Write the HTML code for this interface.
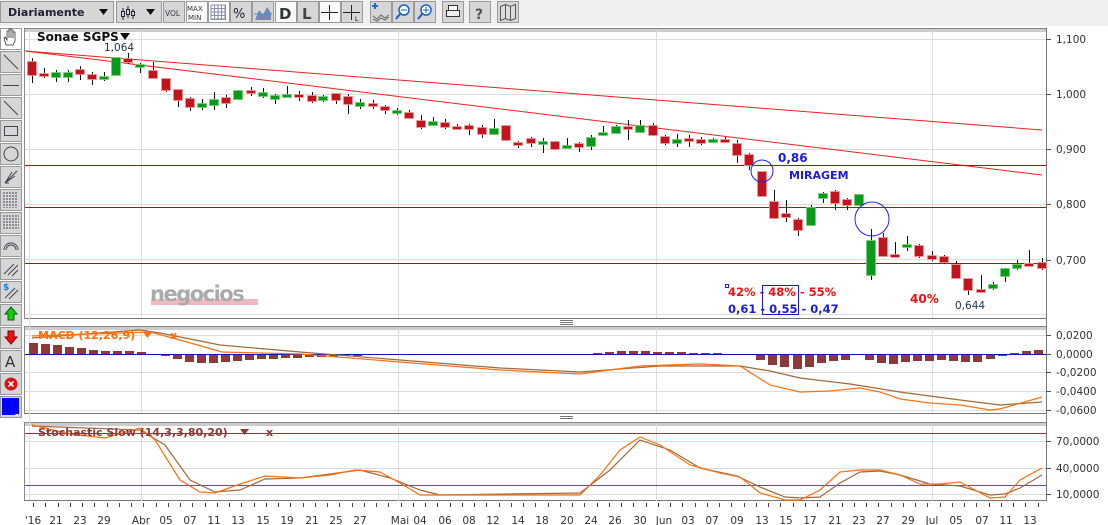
<!DOCTYPE html>
<html><head><meta charset="utf-8"><style>
html,body{margin:0;padding:0;background:#fff;width:1108px;height:525px;overflow:hidden;font-family:"DejaVu Sans",Verdana,sans-serif}
svg{position:absolute;left:0;top:0}
</style></head><body>
<svg id="s" width="1108" height="525" xmlns="http://www.w3.org/2000/svg" font-family="DejaVu Sans, Liberation Sans, sans-serif"></svg>
<script>
var o=[];
function P(s){o.push(s);}
P('<rect x="0" y="0" width="1108" height="26" fill="#f0f0f0"/>');
var btn=[[0,113],[116,161],[163,184],[186,207],[208,229],[230,251],[252,273],[275,296],[297,318],[319,340],[341,362],[370,391],[392,413],[414,435],[442,463],[469,490],[497,518]];
btn.forEach(function(b,i){var f=(i==3||i==4||i==7||i==9)?'#fafafa':'#d6d6d6';
P('<rect x="'+(b[0]+.5)+'" y="1.5" width="'+(b[1]-b[0])+'" height="21" fill="'+f+'" stroke="#9a9a9a"/>');});
P('<text x="8" y="16" font-size="11" font-weight="bold" fill="#223">Diariamente</text>');
P('<path d="M99 9h9l-4.5 6z" fill="#111"/><path d="M146 9h9l-4.5 6z" fill="#111"/>');
P('<g stroke="#223" fill="#d6d6d6"><path d="M123 8v12M128 6v12M133 9v10"/><rect x="121.5" y="11.5" width="3" height="5"/><rect x="126.5" y="9.5" width="3" height="5"/><rect x="131.5" y="11.5" width="3" height="4"/></g>');
P('<text x="165" y="16" font-size="7.5" fill="#334">VOL</text>');
P('<text x="187" y="11" font-size="7" fill="#334">MAX</text><text x="188" y="20" font-size="7" fill="#334">MIN</text>');
var g='';for(var i=0;i<5;i++){g+='M'+(211+i*3.5)+' 5v15M211 '+(5+i*3.5)+'h15';}
P('<path d="'+g+'M211 19.5h15M225.5 5v15" stroke="#8890b0" fill="none"/>');
P('<text x="233" y="18" font-size="13" fill="#223">%</text>');
P('<path d="M255 20l4-10 4 5 4-8 4 6v7z" fill="#7a86b0"/><path d="M254 14h18" stroke="#39c"/>');
P('<text x="279" y="19" font-size="15" font-weight="bold" fill="#333">D</text>');
P('<text x="302" y="19" font-size="15" font-weight="bold" fill="#444">L</text>');
P('<path d="M329.5 5v15M321 12.5h17M351.5 5v15M343 12.5h17" stroke="#222" fill="none"/><text x="355" y="21" font-size="6">L</text>');
P('<path d="M373 16l4 3 4-4 4 3 4-3M373 19l4 2 4-3 4 2 4-3" stroke="#666" fill="none"/><path d="M375 3v6M372 6h6" stroke="#1570d0" stroke-width="2"/>');
P('<circle cx="404" cy="10" r="5" fill="#fff" stroke="#1560c0" stroke-width="1.5"/><path d="M401 10h6" stroke="#1560c0"/><path d="M400 14l-4 5" stroke="#1560c0" stroke-width="2"/>');
P('<circle cx="426" cy="10" r="5" fill="#fff" stroke="#1560c0" stroke-width="1.5"/><path d="M423 10h6M426 7v6" stroke="#1560c0"/><path d="M422 14l-4 5" stroke="#1560c0" stroke-width="2"/>');
P('<rect x="446.5" y="10.5" width="13" height="6" fill="#eee" stroke="#333"/><rect x="448.5" y="5.5" width="9" height="5" fill="#fff" stroke="#333"/>');
P('<text x="475" y="19" font-size="14" font-weight="bold" fill="#555">?</text>');
P('<path d="M500.5 6.5l5 -2 5 2 5 -2v14l-5 2-5-2-5 2z M505.5 4.5v14M510.5 6.5v14" stroke="#555" fill="#ddd"/>');
var ty=[28,51,74,97,120,143,166,189,212,235,258,281,304,327,350,373,396];
ty.forEach(function(y,i){P('<rect x="0.5" y="'+(y+.5)+'" width="21" height="21" fill="'+(i==0?'#fff':'#d6d6d6')+'" stroke="#999"/>');});
P('<path d="M6 45l-2-7 1-1 2 3v-9h2v7-9h2v9-8h2v8-6h2v9l-2 4z" fill="#fff" stroke="#333" stroke-width=".8"/>');
P('<g stroke="#445" fill="none"><path d="M4 55l14 14M3 85.5h16M4 101l14 14"/><rect x="4.5" y="126.5" width="13" height="9"/><circle cx="11" cy="154" r="7"/><path d="M5 183l12-12M5 183l10-7M5 183l7-11M5 183h4"/><path d="M4 192v16M7 192v16M10 192v16M13 192v16M16 192v16" stroke-dasharray="2 1"/><path d="M3 216h16M3 219h16M3 222h16M3 225h16M3 228h16" stroke-dasharray="2 1"/><path d="M4 250a7 7 0 0 1 14 0M6 250a5 5 0 0 1 10 0"/><path d="M4 274l10-10M8 275l10-10M12 276l6-6"/><path d="M5 298l10-10M9 299l9-9"/></g>');
P('<text x="3" y="290" font-size="9" font-weight="bold" fill="#1080e0">$</text>');
P('<path d="M11 307l6 7h-3v6h-6v-6h-3z" fill="#1c1" stroke="#060"/>');
P('<path d="M11 344l6-7h-3v-6h-6v6h-3z" fill="#e11" stroke="#800"/>');
P('<text x="5" y="367" font-size="15" fill="#333">A</text>');
P('<circle cx="11" cy="384" r="6.5" fill="#d01818"/><path d="M8.5 381.5l5 5M13.5 381.5l-5 5" stroke="#fff" stroke-width="1.5"/>');
P('<rect x="2" y="398" width="17" height="17" fill="#0000ff"/><path d="M15 414h4l-2 2z" fill="#fff"/>');
function panel(y1,y2){P('<rect x="24.5" y="'+(y1+.5)+'" width="1022" height="'+(y2-y1)+'" fill="#fff" stroke="#888"/><rect x="25" y="'+(y1+1)+'" width="1021" height="3" fill="#ccc"/>');}
panel(28,318);panel(326,413);panel(422,500);
P('<path d="M24 318.5h1023M24 413.5h1023M24 500.5h1023M1046.5 28v473" stroke="#777"/>');
P('<path d="M560 320.5h13M560 322.5h13M560 324.5h13M560 416.5h13M560 418.5h13" stroke="#777"/>');
var gl='';[39,94,149,204,259,314].forEach(function(y){gl+='M25 '+(y+.5)+'h1021';});
[335,372,391,410].forEach(function(y){gl+='M25 '+(y+.5)+'h1021';});
[441,468,494].forEach(function(y){gl+='M25 '+(y+.5)+'h1021';});
[141,398,656,932].forEach(function(x){gl+='M'+(x+.5)+' 30v288M'+(x+.5)+' 328v85M'+(x+.5)+' 424v77';});
gl+='M29.5 30v470';
P('<path d="'+gl+'" stroke="#ddd" fill="none"/>');
function al(y,t){P('<path d="M1046 '+(y+.5)+'h5" stroke="#555"/><text x="1056" y="'+(y+4)+'" font-size="10.5" fill="#333">'+t+'</text>');}
al(39,'1,100');al(94,'1,000');al(149,'0,900');al(204,'0,800');al(260,'0,700');
al(335,'0,0200');al(354,'0,0000');al(372,'-0,0200');al(391,'-0,0400');al(410,'-0,0600');
al(441,'70,0000');al(468,'40,0000');al(494,'10,0000');
P('<rect x="151" y="299" width="107" height="6" fill="#f0b8c0"/><text x="150" y="301" font-size="21" font-weight="bold" fill="#aaa" letter-spacing="-1.5">negocios</text>');
P('<path d="M25 51L1042 130M25 51L1042 175" stroke="#ee2020" fill="none"/>');
P('<path d="M25 165.5h1021M25 207.5h1021M25 263.5h1021" stroke="#b01010" fill="none"/>');
var C=[[32,62,75,58,83,0],[44,74,76,68,78,0],[56,73,77,70,82,1],[68,73,77,70,82,1],[80,70,74,66,80,0],[92,75,79,72,85,0],[104,77,79,72,81,1],[116,58,75,58,75,1],[128,59,62,53,64,0],[140,65,67,63,73,1],[153,71,78,62,78,0],[166,79,90,79,92,0],[178,90,100,90,107,0],[190,99,107,97,111,0],[202,104,107,99,110,1],[214,100,105,92,110,1],[226,98,103,95,108,0],[238,91,99,90,100,1],[251,91,93,87,96,0],[263,93,96,88,98,1],[275,96,99,94,104,1],[287,95,96,86,96,1],[299,95,97,91,101,0],[312,96,101,92,103,0],[323,97,100,95,102,1],[336,94,100,95,104,0],[348,97,104,94,114,0],[360,103,106,99,109,1],[373,104,106,100,109,0],[385,107,110,105,114,0],[397,111,113,108,115,1],[409,113,118,110,118,0],[421,121,127,115,129,0],[433,122,125,117,126,1],[445,123,127,119,129,0],[457,127,128,124,129,0],[469,126,129,124,135,0],[482,128,134,125,138,0],[494,129,134,119,135,1],[506,126,140,126,141,0],[518,143,145,141,148,0],[531,139,143,137,147,0],[543,142,144,138,153,1],[555,142,149,141,150,0],[567,146,147,138,148,1],[579,144,147,142,152,0],[591,138,146,135,150,1],[603,133,135,126,136,1],[616,127,133,125,134,1],[628,127,129,120,140,0],[640,126,132,120,133,1],[653,126,135,123,136,0],[665,137,143,135,145,0],[677,140,143,134,147,1],[689,139,140,135,147,0],[701,140,143,137,145,0],[713,140,142,138,143,1],[725,140,142,137,143,0],[737,144,155,140,163,0],[749,155,165,153,170,0],[762,172,196,172,196,0],[774,202,218,190,218,0],[786,214,217,200,222,0],[798,220,230,218,236,0],[811,208,225,205,225,1],[823,194,198,192,203,1],[835,192,203,190,210,0],[847,200,205,198,210,0],[859,195,205,195,205,1],[871,241,275,229,280,1],[883,238,256,233,257,0],[895,255,256,242,257,0],[907,245,247,236,251,1],[919,246,256,244,258,0],[932,256,259,251,261,0],[944,257,262,255,264,0],[956,265,278,261,279,0],[968,279,290,279,295,0],[981,290,291,275,291,0],[993,285,288,282,290,1],[1005,269,276,268,282,1],[1017,265,268,260,270,1],[1029,264,265,250,266,0],[1042,263,268,258,270,0]];
C.forEach(function(c){var x=c[0];P('<path d="M'+(x+.5)+' '+c[3]+'V'+c[4]+'" stroke="#111"/>');
var h=Math.max(c[2]-c[1],2);P('<rect x="'+(x-4.5)+'" y="'+(c[1]-.5)+'" width="9" height="'+(h+1)+'" fill="'+(c[5]?'#0a9a1a':'#c0141e')+'" stroke="'+(c[5]?'#7c7':'#e99')+'" stroke-width=".8"/>');});
P('<text x="104" y="51" font-size="10.5" fill="#234">1,064</text>');
P('<text x="37" y="41" font-size="12" font-weight="bold" fill="#111">Sonae SGPS</text><path d="M120 33h10l-5 7z" fill="#111"/>');
P('<circle cx="762" cy="171" r="11" fill="none" stroke="#2020ee"/><circle cx="872" cy="219" r="17" fill="none" stroke="#2020ee"/>');
P('<text x="778" y="162" font-size="12" font-weight="bold" fill="#1a1ae0">0,86</text><text x="789" y="179" font-size="11" font-weight="bold" fill="#1a1ae0">MIRAGEM</text>');
P('<text x="728" y="296" font-size="11.5" font-weight="bold" fill="#ee1111">42% - 48% - 55%</text><text x="728" y="313" font-size="11.5" font-weight="bold" fill="#1a1ae0">0,61 - 0,55 - 0,47</text>');
P('<rect x="725.5" y="284.5" width="3" height="3" fill="none" stroke="#1a1ae0"/><rect x="762.5" y="285.5" width="36" height="29" fill="none" stroke="#1a1ae0"/>');
P('<text x="910" y="303" font-size="12" font-weight="bold" fill="#ee1111">40%</text><text x="955" y="309" font-size="10.5" fill="#234">0,644</text>');
var H=[[33,343],[45,344],[57,345],[69,347],[81,348],[93,350],[105,351],[117,351],[129,351],[141,352],[153,355],[165,356],[177,359],[189,362],[201,363],[213,363],[225,362],[237,361],[249,360],[261,359],[273,359],[285,358],[297,358],[309,357],[321,357],[333,357],[345,356],[357,356],[369,355],[381,355],[393,355],[405,355],[417,355],[429,355],[441,355],[453,355],[465,355],[477,355],[489,355],[501,355],[513,355],[525,355],[537,355],[549,355],[561,355],[573,355],[585,355],[597,353],[609,352],[621,351],[633,351],[645,351],[657,352],[669,352],[681,352],[693,353],[705,353],[717,353],[748,355],[760,360],[772,365],[784,367],[797,369],[809,367],[821,363],[833,361],[845,360],[857,355],[869,360],[881,363],[893,364],[905,362],[917,361],[929,361],[941,360],[953,361],[965,362],[977,362],[990,359],[1002,356],[1014,353],[1026,351],[1038,350]];
H.forEach(function(h){var y1=Math.min(h[1],354),y2=Math.max(h[1],354);P('<rect x="'+(h[0]-4)+'" y="'+y1+'" width="9" height="'+Math.max(y2-y1,1)+'" fill="#8b3a3a"/>');});
P('<path d="M25 354.5h1021" stroke="#1010c0"/>');
function pl(pts,col){P('<polyline points="'+pts+'" fill="none" stroke="'+col+'" stroke-width="1.2"/>');}
pl('32,338 140,330 160,333 220,345 300,352 400,360 500,368 580,372 660,366 740,366 770,371 800,378 850,384 900,392 960,400 1000,405 1042,402','#a06a3a');
pl('32,336 150,332 180,340 222,352 300,354 400,362 500,370 580,374 640,366 700,364 740,366 770,385 800,392 830,391 860,388 880,392 900,399 930,403 960,405 990,410 1000,409 1042,397','#ff7010');
P('<text x="38" y="339" font-size="11" font-weight="bold" fill="#ff7010">MACD (12,26,9)</text><path d="M143 332h9l-4.5 6z" fill="#ff7010"/><text x="170" y="339" font-size="11" font-weight="bold" fill="#ff7010">x</text>');
P('<path d="M25 433.5h1021" stroke="#8b3a3a"/><path d="M25 485.5h1021" stroke="#6a4a9a"/>');
pl('32,426 140,430 165,445 190,480 215,492 240,490 265,479 300,478 360,470 390,478 420,490 440,495 580,493 610,470 640,440 670,450 700,468 737,476 760,487 785,497 800,498 820,497 840,483 860,472 880,471 900,475 930,484 960,486 990,495 1005,494 1020,488 1042,475','#a06a3a');
pl('32,425 70,434 105,438 140,428 155,440 180,480 200,492 215,493 240,484 265,476 300,478 330,475 355,470 380,472 400,483 420,495 580,495 600,475 620,450 640,437 660,445 690,465 720,473 740,477 760,493 785,500 800,500 820,490 840,472 860,470 880,470 900,475 920,484 940,484 960,482 975,490 990,498 1005,497 1020,480 1042,468','#ff7010');
P('<text x="38" y="436" font-size="11" font-weight="bold" fill="#8b3a3a">Stochastic Slow (14,3,3,80,20)</text><path d="M240 429h9l-4.5 6z" fill="#8b3a3a"/><text x="266" y="436" font-size="11" font-weight="bold" fill="#8b3a3a">x</text>');
var tk='';for(var x=33;x<1045;x+=12.25){tk+='M'+(Math.round(x)+.5)+' 503v4';}
P('<path d="'+tk+'" stroke="#444"/>');
var L=[["'16",33],["21",56],["23",80],["29",104],["Abr",141],["05",166],["07",190],["11",214],["13",238],["15",263],["19",287],["21",312],["25",336],["27",360],["Mai",400],["04",420],["06",445],["08",469],["12",493],["14",518],["18",542],["20",567],["24",591],["26",615],["30",640],["Jun",664],["03",688],["07",712],["09",737],["13",762],["15",786],["17",810],["21",835],["23",859],["27",883],["29",908],["Jul",932],["05",956],["07",982],["11",1006],["13",1030]];
L.forEach(function(l){P('<text x="'+l[1]+'" y="524" font-size="10.5" fill="#333" text-anchor="middle">'+l[0]+'</text>');});
document.getElementById('s').innerHTML=o.join('');
</script>
</body></html>
